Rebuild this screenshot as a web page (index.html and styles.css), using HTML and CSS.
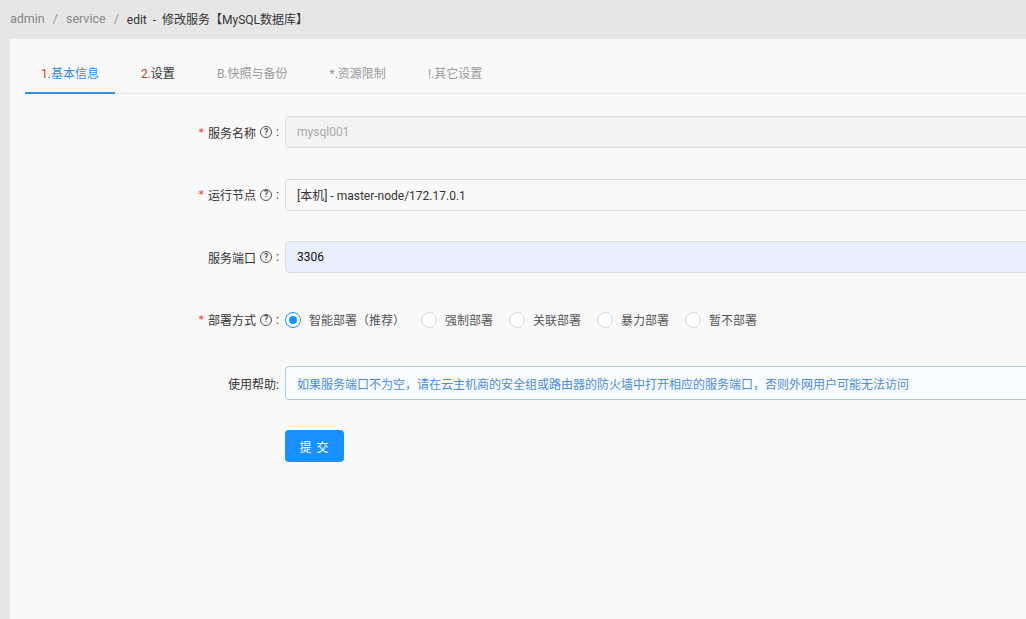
FILE: index.html
```html
<!DOCTYPE html>
<html lang="zh-CN">
<head>
<meta charset="utf-8">
<title>修改服务</title>
<link rel="stylesheet" href="styles.css">
</head>
<body>
<div class="breadcrumb">
  <span class="crumb">admin</span><span class="sep">/</span><span class="crumb">service</span><span class="sep">/</span><span class="current">edit&nbsp; - &nbsp;修改服务【MySQL数据库】</span>
</div>
<div class="card">
  <div class="tabs">
    <div class="tab active"><span class="num">1.</span>基本信息</div>
    <div class="tab dark"><span class="num">2.</span>设置</div>
    <div class="tab muted">B.快照与备份</div>
    <div class="tab muted">*.资源限制</div>
    <div class="tab muted">!.其它设置</div>
  </div>
  <div class="form">
    <div class="row">
      <div class="label"><span class="req">*</span>服务名称<span class="q">?</span>:</div>
      <div class="control"><div class="input disabled">mysql001</div></div>
    </div>
    <div class="row">
      <div class="label"><span class="req">*</span>运行节点<span class="q">?</span>:</div>
      <div class="control"><div class="input">[本机] - master-node/172.17.0.1</div></div>
    </div>
    <div class="row">
      <div class="label">服务端口<span class="q">?</span>:</div>
      <div class="control"><div class="input autofill">3306</div></div>
    </div>
    <div class="row">
      <div class="label"><span class="req">*</span>部署方式<span class="q">?</span>:</div>
      <div class="control radios">
        <label class="radio checked"><span class="dot"></span><span class="rtext">智能部署（推荐）</span></label>
        <label class="radio"><span class="dot"></span><span class="rtext">强制部署</span></label>
        <label class="radio"><span class="dot"></span><span class="rtext">关联部署</span></label>
        <label class="radio"><span class="dot"></span><span class="rtext">暴力部署</span></label>
        <label class="radio"><span class="dot"></span><span class="rtext">暂不部署</span></label>
      </div>
    </div>
    <div class="row">
      <div class="label">使用帮助:</div>
      <div class="control"><div class="input help">如果服务端口不为空，请在云主机商的安全组或路由器的防火墙中打开相应的服务端口，否则外网用户可能无法访问</div></div>
    </div>
    <div class="row">
      <div class="label"></div>
      <div class="control"><button class="btn">提 交</button></div>
    </div>
  </div>
</div>
</body>
</html>
```
FILE: styles.css
```css
html, body {
  margin: 0;
  padding: 0;
  background: #e6e6e6;
  overflow: hidden;
  width: 1026px;
  height: 619px;
}
body {
  font-family: "Roboto", "Noto Sans CJK SC", sans-serif;
  font-size: 12px;
  color: #333;
}
.breadcrumb {
  height: 39px;
  box-sizing: border-box;
  padding: 0 10px 2px;
  display: flex;
  align-items: center;
  font-size: 12.5px;
  color: #888;
}
.sep {
  margin: 0 8px;
  color: #999;
}
.current {
  color: #333;
  font-size: 12px;
}
.card {
  margin-left: 10px;
  width: 1200px;
  height: 600px;
  background: #f9f9f9;
  padding: 11px 0 0 15px;
  box-sizing: border-box;
}
.tabs {
  display: flex;
  border-bottom: 1px solid #e6e6e6;
  height: 44px;
  box-sizing: border-box;
}
.tab {
  padding: 6px 16px 0;
  margin-right: 10px;
  line-height: 36px;
  height: 44px;
  box-sizing: border-box;
  color: #999;
  font-size: 12px;
}
.tab .num { color: #d0381e; }
.tab.active {
  color: #2d8cf0;
  border-bottom: 2px solid #3a8ddb;
  margin-bottom: -1px;
}
.tab.dark { color: #333; }
.form {
  padding-top: 22px;
}
.row {
  display: flex;
  align-items: center;
  margin-bottom: 30.5px;
  min-height: 32px;
}
.label {
  width: 254px;
  flex: none;
  text-align: right;
  margin-right: 6px;
  color: #333;
  display: flex;
  justify-content: flex-end;
  align-items: center;
  font-size: 12px;
}
.req {
  color: #f5222d;
  margin-right: 4px;
  font-family: "DejaVu Sans", sans-serif;
  font-size: 11px;
}
.q {
  display: inline-flex;
  align-items: center;
  justify-content: center;
  width: 10px;
  height: 10px;
  border: 1px solid #555;
  border-radius: 50%;
  font-size: 8.5px;
  line-height: 1;
  margin: 0 4px 0 4px;
  color: #444;
  font-weight: 600;
}
.control {
  flex: 1;
  display: flex;
  align-items: center;
}
.input {
  flex: 1;
  height: 32px;
  box-sizing: border-box;
  border: 1px solid #dcdcdc;
  border-radius: 4px;
  padding: 0 11px;
  display: flex;
  align-items: center;
  background: #f9f9f9;
  color: #333;
}
.input.disabled {
  background: #f3f3f3;
  color: #aaa;
}
.input.autofill {
  background: #e8f0fe;
  color: #111;
}
.input.help {
  height: 34px;
  background: #f8fbff;
  border-color: #aecbee;
  color: #4a8de6;
}
.radios {
  height: 32px;
}
.radio {
  display: flex;
  align-items: center;
  margin-right: 8px;
}
.dot {
  width: 16px;
  height: 16px;
  box-sizing: border-box;
  border: 1px solid #d9d9d9;
  border-radius: 50%;
  background: #fff;
  position: relative;
}
.radio.checked .dot {
  border-color: #1890ff;
}
.radio.checked .dot::after {
  content: "";
  position: absolute;
  left: 3px;
  top: 3px;
  width: 8px;
  height: 8px;
  border-radius: 50%;
  background: #1890ff;
}
.rtext {
  padding: 0 8px;
  color: #555;
}
.btn {
  width: 59px;
  height: 32px;
  border: none;
  border-radius: 4px;
  background: #1890ff;
  color: #fff;
  font-family: "Roboto", "Noto Sans CJK SC", sans-serif;
  font-size: 12px;
  padding: 0;
  letter-spacing: 1px;
  margin-top: -1px;
}
```
